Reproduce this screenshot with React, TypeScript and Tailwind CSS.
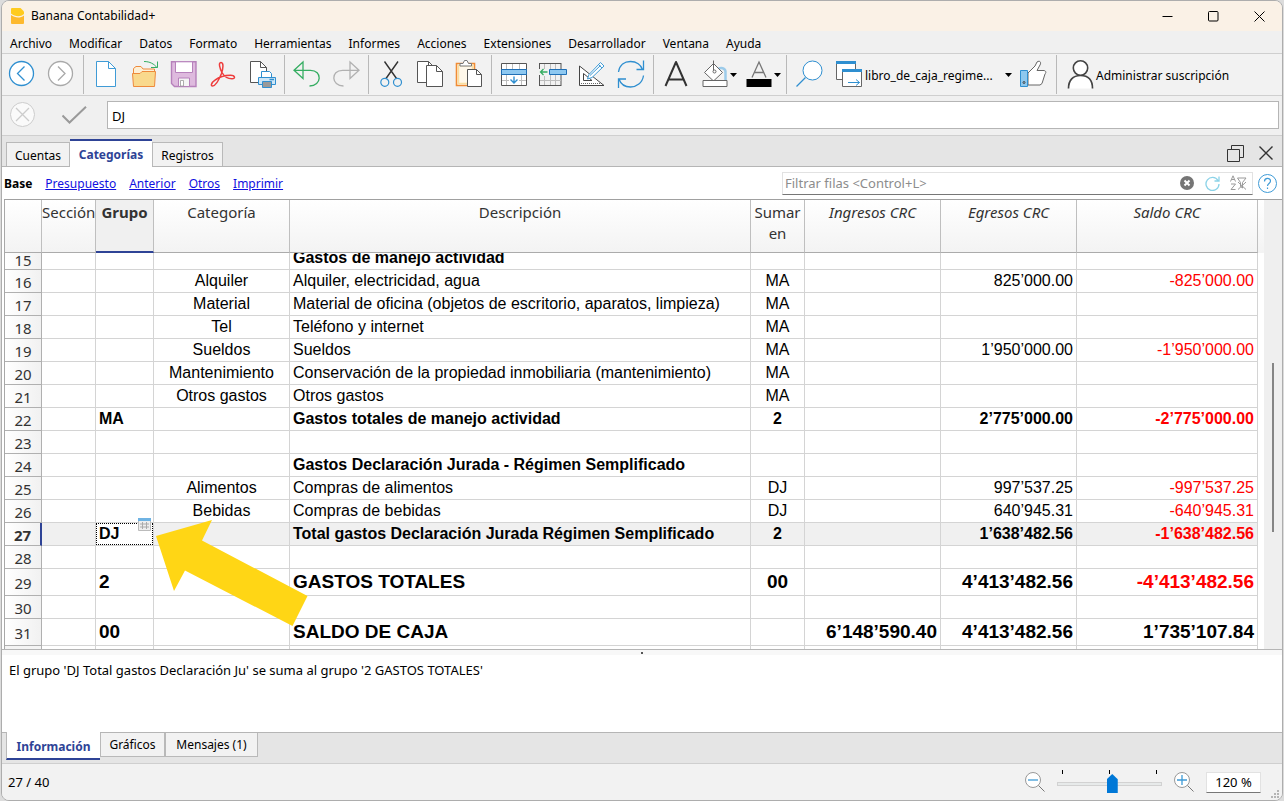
import React from "react";

const menus = ["Archivo", "Modificar", "Datos", "Formato", "Herramientas", "Informes", "Acciones", "Extensiones", "Desarrollador", "Ventana", "Ayuda"];

type Row = {
  n: number;
  group?: string;
  cat?: string;
  desc?: string;
  sum?: string;
  inc?: string;
  exp?: string;
  bal?: string;
  bold?: boolean;
  big?: boolean;
  black?: boolean;
};

const rows: Row[] = [
  { n: 15, desc: "Gastos de manejo actividad", bold: true },
  { n: 16, cat: "Alquiler", desc: "Alquiler, electricidad, agua", sum: "MA", exp: "825’000.00", bal: "-825’000.00" },
  { n: 17, cat: "Material", desc: "Material de oficina (objetos de escritorio, aparatos, limpieza)", sum: "MA" },
  { n: 18, cat: "Tel", desc: "Teléfono y internet", sum: "MA" },
  { n: 19, cat: "Sueldos", desc: "Sueldos", sum: "MA", exp: "1’950’000.00", bal: "-1’950’000.00" },
  { n: 20, cat: "Mantenimiento", desc: "Conservación de la propiedad inmobiliaria (mantenimiento)", sum: "MA" },
  { n: 21, cat: "Otros gastos", desc: "Otros gastos", sum: "MA" },
  { n: 22, group: "MA", desc: "Gastos totales de manejo actividad", sum: "2", exp: "2’775’000.00", bal: "-2’775’000.00", bold: true },
  { n: 23 },
  { n: 24, desc: "Gastos Declaración Jurada - Régimen Semplificado", bold: true },
  { n: 25, cat: "Alimentos", desc: "Compras de alimentos", sum: "DJ", exp: "997’537.25", bal: "-997’537.25" },
  { n: 26, cat: "Bebidas", desc: "Compras de bebidas", sum: "DJ", exp: "640’945.31", bal: "-640’945.31" },
  { n: 27, group: "DJ", desc: "Total gastos Declaración Jurada Régimen Semplificado", sum: "2", exp: "1’638’482.56", bal: "-1’638’482.56", bold: true },
  { n: 28 },
  { n: 29, group: "2", desc: "GASTOS TOTALES", sum: "00", exp: "4’413’482.56", bal: "-4’413’482.56", bold: true, big: true },
  { n: 30 },
  { n: 31, group: "00", desc: "SALDO DE CAJA", inc: "6’148’590.40", exp: "4’413’482.56", bal: "1’735’107.84", bold: true, big: true, black: true },
];

function Icon({ children }: { children: React.ReactNode }) {
  return (
    <svg width="27" height="27" viewBox="0 0 27 27" fill="none" className="shrink-0 overflow-visible" aria-hidden="true">
      {children}
    </svg>
  );
}

function Tool({ label, children }: { label: string; children: React.ReactNode }) {
  return (
    <button aria-label={label} className="flex h-full w-[39px] shrink-0 items-center justify-center">
      <Icon>{children}</Icon>
    </button>
  );
}

function Caret() {
  return (
    <svg width="7" height="4" viewBox="0 0 7 4" className="shrink-0" aria-hidden="true">
      <path d="M0 0H7L3.5 4Z" fill="#000" />
    </svg>
  );
}

function Sep() {
  return (
    <div className="flex h-[39px] w-[6px] shrink-0 justify-center">
      <div className="w-px bg-[#b9b9b9]" />
    </div>
  );
}

function Toolbar() {
  return (
    <div className="flex h-[42px] shrink-0 items-center border-b border-[#cfcfcf] bg-[#f2f2f2]">
      <Tool label="Atrás">
        <circle cx="13.500" cy="12.500" r="12" fill="#fff" stroke="#2f8fd0" strokeWidth="1.300" />
        <path d="M16.500 5.500L9.500 12.500L16.500 19.500" stroke="#2f8fd0" strokeWidth="1.300" />
      </Tool>
      <Tool label="Adelante">
        <circle cx="13.500" cy="12.500" r="12" fill="#fff" stroke="#a9a9a9" strokeWidth="1.300" />
        <path d="M11 5.500L18 12.500L11 19.500" stroke="#a9a9a9" strokeWidth="1.300" />
      </Tool>
      <Sep />
      <Tool label="Nuevo">
        <path d="M4.500 .5H16.500L23.500 7.500V25.500H4.500Z" fill="#fff" stroke="#3f9bd6" />
        <path d="M16.500 .5V7.500H23.500" stroke="#3f9bd6" />
      </Tool>
      <Tool label="Abrir">
        <path d="M2.500 15V7.500L5 5.500H10L12 8H23.500V15" fill="#fdf0d6" stroke="#ee8a3c" />
        <path d="M1.500 12.500H9L11 10.500H24.500L23.500 25.500H2.500Z" fill="#f9d98d" stroke="#ee8a3c" />
        <path d="M13 .5C19 .5 23 3 26 6.500M26.500 .5V6.500H20" stroke="#35ad62" />
      </Tool>
      <Tool label="Guardar">
        <path d="M1.500 .8H26V25.500H4.500L1.500 22.500Z" fill="#debade" stroke="#b681bb" strokeWidth="1.400" />
        <path d="M5.500 .8H22.500V11.500H5.500Z" fill="#fff" stroke="#b681bb" />
        <path d="M8.500 17H19.500V25.500H8.500Z" fill="#f4f4f4" stroke="#b681bb" />
        <path d="M10.500 19.500H13.500V25H10.500Z" fill="#fff" stroke="#999" strokeWidth=".8" />
      </Tool>
      <Tool label="Exportar PDF">
        <path d="M12 1.500C9 1.500 11 8 13 11.500C15.500 16 19.500 17.800 23 17.800C27 17.800 26 14.300 21.500 14.300C16.500 14.300 9.500 16.500 6 19.200C2 22 1.500 25 3.500 25C6.500 25 10.500 17.500 12.500 12.500C14 8 15 1.500 12 1.500Z" stroke="#ee3d3d" strokeWidth="1.500" />
      </Tool>
      <Tool label="Imprimir">
        <path d="M2.500 .5H12.500L18.500 6.500V21.500H2.500Z" fill="#fff" stroke="#555" />
        <path d="M12.500 .5V6.500H18.500" stroke="#555" />
        <path d="M13.500 10.500H21.500L23.500 12.500V17H13.500Z" fill="#fff" stroke="#2f8fd0" />
        <path d="M10.500 16.500H27.500V23.500H10.500Z" fill="#cde6f7" stroke="#2f8fd0" />
        <path d="M14.500 20.500H23.500V26.500H14.500Z" fill="#999" stroke="#2f8fd0" />
        <path d="M21.500 18.500H26" stroke="#2f8fd0" strokeWidth="1.500" />
      </Tool>
      <Sep />
      <Tool label="Deshacer">
        <path d="M10 1V17.500L1 9.300ZM1 9.300H17.500C29.500 9.300 29 25 16.500 25" stroke="#35ad62" strokeWidth="1.300" />
      </Tool>
      <Tool label="Rehacer">
        <path d="M18 1V17.500L27 9.300ZM27 9.300H10.500C-1.500 9.300 -1 25 11.500 25" stroke="#b1b1b1" strokeWidth="1.300" />
      </Tool>
      <Sep />
      <Tool label="Cortar">
        <path d="M7.500 .5L19.500 17.500M21 .5L9 17.500" stroke="#333" strokeWidth="1.400" />
        <circle cx="7.800" cy="21.300" r="4" stroke="#2f8fd0" strokeWidth="1.200" />
        <circle cx="20.500" cy="21.300" r="4" stroke="#2f8fd0" strokeWidth="1.200" />
      </Tool>
      <Tool label="Copiar">
        <path d="M1.500 .5H12.500L17.500 5.500V21.500H1.500Z" fill="#fff" stroke="#555" />
        <path d="M12.500 .5V5.500H17.500" stroke="#555" />
        <path d="M10.500 4.500H20.500L26.500 10.500V25.500H10.500Z" fill="#fff" stroke="#555" />
        <path d="M20.500 4.500V10.500H26.500" stroke="#555" />
      </Tool>
      <Tool label="Pegar">
        <path d="M1.500 2.500H19.500V24.500H1.500Z" fill="#fff8ea" stroke="#f08c35" strokeWidth="1.600" />
        <path d="M3.500 4.500H17.500V22.500H3.500Z" stroke="#f9dfa0" strokeWidth="1.500" />
        <path d="M5 5V2.500H8L9.500 -.5H12L13.500 2.500H16.500V5Z" fill="#fff" stroke="#777" />
        <path d="M12.500 8.500H21.500L26.500 13.500V25.500H12.500Z" fill="#fff" stroke="#555" />
        <path d="M21.500 8.500V13.500H26.500" stroke="#555" />
      </Tool>
      <Sep />
      <Tool label="Agregar filas">
        <path d="M1.500 2.500H26.500V24.500H1.500Z" fill="#fff" stroke="#555" />
        <path d="M6.500 3V8M6.500 14V24M12.500 3V8M19.500 3V8M21.500 14V24M2 19.500H9M19 19.500H26" stroke="#bdbdbd" />
        <path d="M1.500 8.500H26.500V13.500H1.500Z" fill="#8ec8f0" stroke="#1f6fb5" />
        <path d="M14 15.500V22M10.500 18.500L14 22L17.500 18.500" stroke="#2f8fd0" strokeWidth="1.400" />
      </Tool>
      <Tool label="Insertar filas">
        <path d="M1 2.500H22M1 24.500H22M.5 2V8M.5 14V25M22 2V8M22 14V25" stroke="#555" />
        <path d="M5.500 3V8M11.500 3V8M16.500 3V8M5.500 15V24M11.500 14V24M16.500 14V24M1 19.500H22" stroke="#bdbdbd" />
        <path d="M10.500 8.500H27.500V13.500H10.500Z" fill="#8ec8f0" stroke="#1f6fb5" />
        <path d="M1.500 11H8.500M4.500 8L1.500 11L4.500 14" stroke="#35ad62" strokeWidth="1.300" />
      </Tool>
      <Tool label="Diseño">
        <path d="M1.500 5L26 24.500H1.500Z" stroke="#444" fill="#fff" />
        <path d="M5.500 12.500V19.500H14Z" stroke="#444" />
        <path d="M3 22.500H22" stroke="#666" strokeDasharray="1 1" />
        <path d="M9.500 18L11 13.500L22.500 1.500L26 5L14 16.500Z" fill="#fff" stroke="#3f9bd6" />
        <path d="M20.500 3.500L24 7M12 14.500L22.500 4.500" stroke="#3f9bd6" />
      </Tool>
      <Tool label="Recalcular">
        <path d="M1.500 11C2.500 4 7.500 .5 13.500 .5C19.500 .5 24 4 25.500 8.500M26.500 -.5V8.500H19.500M26.500 14.500C25.500 22 19.500 26 13.500 26C7.500 26 3.500 22.500 2 18M1.500 27V18H9" stroke="#2f8fd0" strokeWidth="1.300" />
      </Tool>
      <Sep />
      <Tool label="Fuente">
        <path d="M3.500 25L14 1L24.500 25M7 18.500H21" stroke="#333" strokeWidth="2" strokeLinejoin="round" />
      </Tool>
      <button aria-label="Color de fondo" className="flex h-full w-[44px] shrink-0 items-center gap-[2px] pl-[6px]">
        <Icon>
          <path d="M17 8C21.500 5.500 25 8 24.500 12V20" stroke="#9ccbea" strokeWidth="2.500" />
          <path d="M12.500 2.500L21.500 11.500L12.500 20L3.500 11.500Z" fill="#fff" stroke="#666" />
          <path d="M12.500 -.5V9.500" stroke="#666" />
          <circle cx="13.500" cy="10.500" r="1.500" stroke="#666" />
          <path d="M2 19.500H26V25.500H2Z" fill="#fff" stroke="#666" />
        </Icon>
        <Caret />
      </button>
      <button aria-label="Color de texto" className="flex h-full w-[44px] shrink-0 items-center gap-[2px] pl-[6px]">
        <Icon>
          <path d="M7 16.500L14 1L21 16.500M9.500 11.500H18.500" stroke="#777" strokeWidth="1.300" />
          <path d="M1.500 18H26.500V26H1.500Z" fill="#000" />
        </Icon>
        <Caret />
      </button>
      <Sep />
      <Tool label="Buscar">
        <circle cx="17.500" cy="9.500" r="9.500" fill="#fff" stroke="#2f8fd0" />
        <path d="M10.500 16.500L1.500 25.500" stroke="#2f8fd0" strokeWidth="1.200" />
      </Tool>
      <button className="flex h-full w-[191px] shrink-0 items-center pl-[7px] text-left">
        <Icon>
          <path d="M1.500 .5H20.500V18.500H1.500Z" fill="#fff" stroke="#666" />
          <path d="M1 0H21V3H1Z" fill="#2f8fd0" />
          <path d="M7.500 8.500H26.500V25.500H7.500Z" fill="#fff" stroke="#666" />
          <path d="M7 8H27V11H7Z" fill="#2f8fd0" />
          <path d="M13 21.500H24.500M21 18.500L24.500 21.500L21 24.500" stroke="#2f8fd0" />
        </Icon>
        <span className="ml-[3px] flex-1 pt-[2px]">libro_de_caja_regime...</span>
        <span className="mr-[7px]"><Caret /></span>
      </button>
      <button aria-label="Me gusta" className="flex h-full w-[34px] shrink-0 items-center">
        <Icon>
          <path d="M9 12L16 5L18 1C21 -1 22.500 1.500 21 4L18 9.500H25C27.500 10 27 12 26 13L23 22.500L21 24H9Z" fill="#fff" stroke="#666" />
          <path d="M1.500 9.500H8.500V25.500H1.500Z" fill="#8ec8ee" stroke="#2f8fd0" />
          <circle cx="5" cy="21.500" r="1" stroke="#444" />
        </Icon>
      </button>
      <Sep />
      <button className="flex h-full shrink-0 items-center gap-[2px] pl-[8px]">
        <Icon>
          <path d="M1.500 27.500C1.500 19 6 14.500 13.500 14.500C21 14.500 25.500 19 25.500 27.500" fill="#fff" stroke="#444" strokeWidth="1.700" />
          <circle cx="13.500" cy="7" r="7.200" fill="#fff" stroke="#444" strokeWidth="1.600" />
        </Icon>
        <span className="pt-[2px]">Administrar suscripción</span>
      </button>
    </div>
  );
}

const th = "border-r border-b border-r-[#bfbfbf] border-b-[#ababab] bg-linear-to-b from-white to-[#f3f3f3] px-0 pt-[2px] align-top text-[15px] leading-[21px] font-normal text-[#333]";

function Ledger() {
  return (
    <table className="w-full table-fixed border-separate border-spacing-0 border-l border-[#a8a8a8] font-['Liberation_Sans',sans-serif] text-[16px] leading-[18px]">
      <colgroup>
        <col className="w-[37px]" />
        <col className="w-[54px]" />
        <col className="w-[58px]" />
        <col className="w-[136px]" />
        <col />
        <col className="w-[54px]" />
        <col className="w-[136px]" />
        <col className="w-[136px]" />
        <col className="w-[181px]" />
      </colgroup>
      <thead className="font-['Noto_Sans',sans-serif]">
        <tr className="h-[53px]">
          <th className={th} aria-label="Fila" />
          <th className={th}>Sección</th>
          <th className="border-r border-b-2 border-r-[#bfbfbf] border-b-[#2e4396] bg-[#f0f0f0] pt-[2px] align-top text-[15px] leading-[21px] font-bold text-[#333]">Grupo</th>
          <th className={th}>Categoría</th>
          <th className={th}>Descripción</th>
          <th className={th}>Sumar en</th>
          <th className={th}><i>Ingresos CRC</i></th>
          <th className={th}><i>Egresos CRC</i></th>
          <th className={th}><i>Saldo CRC</i></th>
        </tr>
      </thead>
      <tbody>
        {rows.map((r) => {
          const active = r.n === 27;
          const first = r.n === 15;
          const td = "border-r border-b border-[#d4d4d4] whitespace-nowrap px-[3px] py-0 " + (first ? "align-top" : "align-middle");
          const text = (s?: string) => (first && s ? <div className="flex h-[14px] items-end overflow-hidden">{s}</div> : s);
          return (
            <tr
              key={r.n}
              className={
                (first ? "h-[17px] " : r.big ? "h-[27px] text-[19px] leading-[22px] " : "h-[23px] ") +
                (r.bold ? "font-bold " : "") +
                (active ? "bg-[#f0f0f0]" : "")
              }
            >
              <th
                className={
                  "border-b border-[#b0b0b0] bg-linear-to-r from-white to-[#f1f1f1] px-0 pb-0 text-center font-['Noto_Sans',sans-serif] text-[15px] text-[#333] " +
                  (first ? "pt-0 align-top leading-[14px] " : "pt-[2px] leading-[15px] ") +
                  (active ? "border-r-2 border-r-[#2e4396] font-bold" : "border-r font-normal")
                }
              >
                {r.n}
              </th>
              <td className={td} />
              {active ? (
                <td className="relative border-r border-b border-[#d4d4d4] p-0">
                  <div className="h-[22px] border border-dotted border-black bg-white pl-[2px] leading-[20px]">{r.group}</div>
                  <svg width="13" height="13" viewBox="0 0 13 13" className="absolute -top-[5px] left-[42px]" aria-hidden="true">
                    <path d="M.5 .5H12.500V12.500H.5Z" fill="#eee" stroke="#bbb" />
                    <path d="M0 0H13V3H0Z" fill="#6fb3e3" />
                    <path d="M2 6H11M2 9H11M4.500 4V11M8.500 4V11" stroke="#aaa" />
                  </svg>
                  <svg width="152" height="107" viewBox="0 0 152 107" className="absolute -top-[3px] left-[60px] z-10 max-w-none" aria-hidden="true">
                    <path d="M0 16L56 0L46 20.500L151.500 76L136.500 106L29 50.500L18 71Z" fill="#ffd615" />
                  </svg>
                </td>
              ) : (
                <td className={td}>{r.group}</td>
              )}
              <td className={td + " text-center"}>{r.cat}</td>
              <td className={td}>{text(r.desc)}</td>
              <td className={td + " text-center"}>{r.sum}</td>
              <td className={td + " text-right"}>{r.inc}</td>
              <td className={td + " text-right"}>{r.exp}</td>
              <td className={td + " text-right " + (r.black ? "text-black" : "text-[#f00]")}>{r.bal}</td>
            </tr>
          );
        })}
        <tr className="h-[23px]">
          <th className="border-r border-[#b0b0b0] bg-[#f4f4f4]" aria-label="Fila siguiente" />
          {[1, 2, 3, 4, 5, 6, 7, 8].map((i) => (
            <td key={i} className="border-r border-[#d4d4d4]" />
          ))}
        </tr>
      </tbody>
    </table>
  );
}

function Magnifier({ plus }: { plus?: boolean }) {
  return (
    <svg width="20" height="20" viewBox="0 0 20 20" fill="none" aria-hidden="true">
      <circle cx="8" cy="8" r="7.500" fill="#fff" stroke="#999" />
      <path d="M13.500 13.500L19.500 19.500" stroke="#777" />
      <path d={plus ? "M3 8H13M8 3V13" : "M3 8H13"} stroke="#3f9bd6" strokeWidth="1.300" />
    </svg>
  );
}

export default function App() {
  return (
    <div className="h-screen bg-[#dcdcdc] px-px font-['Noto_Sans',sans-serif] text-[12px] text-black">
      <div className="flex h-full flex-col overflow-hidden rounded-lg border border-[#adadad] bg-[#f0f0f0]">
        <header className="flex h-[30px] shrink-0 items-center bg-[#faf1e6] pl-[9px]">
          <svg width="13" height="16" viewBox="0 0 13 16" aria-hidden="true">
            <path d="M1 0H9.500L13 3.500V6C9 9.500 4 8.500 0 5.500V1Q0 0 1 0Z" fill="#ffcb1f" />
            <path d="M0 7C4 10 9 10.500 13 7.500V15Q13 16 12 16H1Q0 16 0 15Z" fill="#fdb92e" />
          </svg>
          <h1 className="ml-[7px] flex-1">Banana Contabilidad+</h1>
          <button aria-label="Minimizar" className="flex h-full w-[46px] items-center justify-center">
            <svg width="11" height="11" viewBox="0 0 11 11"><path d="M.5 5.500H10.500" stroke="#000" /></svg>
          </button>
          <button aria-label="Maximizar" className="flex h-full w-[46px] items-center justify-center">
            <svg width="11" height="11" viewBox="0 0 11 11"><rect x=".5" y=".5" width="9.500" height="9.500" rx="1" fill="none" stroke="#000" /></svg>
          </button>
          <button aria-label="Cerrar" className="flex h-full w-[46px] items-center justify-center">
            <svg width="11" height="11" viewBox="0 0 11 11"><path d="M.5 .5L10.500 10.500M10.500 .5L.5 10.500" stroke="#000" /></svg>
          </button>
        </header>
        <nav className="flex h-[23px] shrink-0 items-center gap-[17px] border-b border-[#cfcfcf] pt-[3px] pl-[8px]">
          {menus.map((m) => (
            <button key={m}>{m}</button>
          ))}
        </nav>
        <Toolbar />
        <div className="flex h-[40px] shrink-0 items-start border-b border-[#cfcfcf] pr-[3px] pl-[8px]">
          <button aria-label="Cancelar" className="mt-[6px]">
            <svg width="25" height="25" viewBox="0 0 25 25" fill="none">
              <circle cx="12.500" cy="12.500" r="12" fill="#fafafa" stroke="#ccc" />
              <path d="M6 6L19 19M19 6L6 19" stroke="#ccc" strokeWidth="1.300" />
            </svg>
          </button>
          <button aria-label="Aceptar" className="mt-[10px] ml-[27px]">
            <svg width="25" height="18" viewBox="0 0 25 18" fill="none">
              <path d="M.5 9.500L7.500 16.500L24 .8" stroke="#9a9a9a" strokeWidth="2" />
            </svg>
          </button>
          <input aria-label="Contenido de la celda" defaultValue="DJ" className="mt-[5px] ml-[20px] h-[28px] min-w-0 flex-1 border border-[#b5b5b5] bg-white px-[4px] pt-[2px] text-[13px] outline-none" />
        </div>

        <div className="flex h-[31px] shrink-0 border-b border-[#b5b5b5] bg-[#e5e5e5] pl-[4px]">
          <div className="flex flex-1 items-end">
            <button className="h-[24px] w-[64px] border border-b-0 border-[#b9b9b9] bg-[#f2f2f2] pt-[2px]">Cuentas</button>
            <button className="-mb-px h-[28px] w-[82px] border-t-2 border-[#2e4396] bg-white pt-[2px] font-bold text-[#2e4396]">Categorías</button>
            <button className="h-[24px] w-[71px] border border-b-0 border-[#b9b9b9] bg-[#f2f2f2] pt-[2px]">Registros</button>
          </div>
          <button aria-label="Restaurar" className="mr-[15px] pt-[4px]">
            <svg width="17" height="17" viewBox="0 0 17 17" fill="none"><path d="M.5 4.500H12.500V16.500H.5ZM4.500 4V.5H16.500V12.500H13" stroke="#333" /></svg>
          </button>
          <button aria-label="Cerrar tabla" className="mr-[9px] pt-[4px]">
            <svg width="14" height="14" viewBox="0 0 14 14"><path d="M.5 .5L13.500 13.500M13.500 .5L.5 13.500" stroke="#333" strokeWidth="1.400" /></svg>
          </button>
        </div>

        <div className="flex h-[32px] shrink-0 items-center bg-white pr-[5px] pl-[2px]">
          <div className="flex flex-1 gap-[13px] pt-[2px]">
            <b>Base</b>
            {["Presupuesto", "Anterior", "Otros", "Imprimir"].map((l) => (
              <a key={l} href="#" className="text-[#1010e0] underline">{l}</a>
            ))}
          </div>
          <div className="flex h-[23px] w-[471px] items-center border border-[#e2e2e2] border-b-[#777]">
            <input aria-label="Filtrar filas" placeholder="Filtrar filas <Control+L>" className="min-w-0 flex-1 pt-px pl-[2px] text-[13px] outline-none placeholder:text-[#8c8c8c]" />
            <button aria-label="Borrar filtro">
              <svg width="14" height="14" viewBox="0 0 14 14"><circle cx="7" cy="7" r="7" fill="#757575" /><path d="M4.500 4.500L9.500 9.500M9.500 4.500L4.500 9.500" stroke="#fff" strokeWidth="2" /></svg>
            </button>
            <button aria-label="Actualizar filtro" className="ml-[11px]">
              <svg width="15" height="15" viewBox="0 0 15 15" fill="none"><path d="M13 4.500A6.500 6.500 0 1 0 14 8M14 .5V5H9.500" stroke="#8cd3e8" strokeWidth="1.300" /></svg>
            </button>
            <button aria-label="Quitar orden y filtro" className="mr-[5px] ml-[10px]">
              <svg width="17" height="16" viewBox="0 0 17 16" fill="none" stroke="#999"><path d="M.5 6.500L3 .8L5.500 6.500M1.500 4.500H4.500M1 9H5.500L1 14.500H5.500M7.500 3H16L12.500 7.500V13L10.500 11.500V7.500ZM8 7L16 14.500M16 7L8 14.500" /></svg>
            </button>
          </div>
          <button aria-label="Ayuda" className="ml-[5px]">
            <svg width="19" height="19" viewBox="0 0 19 19" fill="none" stroke="#3f9bd6"><circle cx="9.500" cy="9.500" r="9" /><path d="M6.500 7.500C6.500 3.500 12.500 3.500 12.500 7C12.500 9.500 9.500 9.500 9.500 12M9.500 13.500V15" strokeWidth="1.200" /></svg>
          </button>
        </div>

        <main className="flex min-h-0 flex-1 border-b border-[#b5b5b5] bg-white pl-[2px]">
          <div className="min-w-0 flex-1 overflow-hidden border-t border-[#a0a0a0]"><Ledger /></div>
          <div className="w-[6px] border-t border-[#a0a0a0]">
            <div className="h-[53px] bg-linear-to-b from-white to-[#f3f3f3]" />
          </div>
          <div className="flex w-[18px] flex-col items-center border-t border-[#a0a0a0] bg-[#efefef]">
            <div className="flex-[163]" />
            <div className="w-[2px] flex-[169] bg-[#858585]" />
            <div className="flex-[117]" />
          </div>
        </main>
        <div className="flex h-[5px] shrink-0 items-center justify-center bg-[#f8f8f8]">
          <div className="h-[2px] w-[2px] bg-[#555]" />
        </div>
        <section className="h-[77px] shrink-0 bg-white pt-[6px] pl-[7px] text-[13px]">El grupo 'DJ Total gastos Declaración Ju' se suma al grupo '2 GASTOS TOTALES'</section>
        <div className="flex h-[32px] shrink-0 items-start border-y border-t-[#b5b5b5] border-b-[#cfcfcf] bg-[#e5e5e5] pl-[4px]">
          <button className="-mt-px h-[28px] w-[94px] border-b-2 border-l border-b-[#2e4396] border-l-[#b9b9b9] bg-white pt-[3px] font-bold text-[#2e4396]">Información</button>
          <button className="h-[24px] w-[65px] border border-t-0 border-[#b9b9b9] bg-[#f2f2f2] pt-px">Gráficos</button>
          <button className="h-[24px] w-[93px] border border-t-0 border-[#b9b9b9] bg-[#f2f2f2] pt-px">Mensajes (1)</button>
        </div>
        <footer className="relative flex h-[36px] shrink-0 items-center bg-[#f2f2f2] pr-[21px] pl-[6px] text-[13px]">
          <span className="flex-1 pt-px">27 / 40</span>
          <button aria-label="Reducir"><Magnifier /></button>
          <div className="mx-[12px] flex w-[105px] flex-col">
            <div className="flex h-[4px] justify-between px-[5px]">
              <i className="w-px bg-black" />
              <i className="w-px bg-black" />
              <i className="w-px bg-black" />
            </div>
            <input
              type="range"
              aria-label="Zoom"
              min="0"
              max="100"
              defaultValue="53"
              className="h-[20px] w-full appearance-none bg-transparent [&::-webkit-slider-runnable-track]:h-[4px] [&::-webkit-slider-runnable-track]:border [&::-webkit-slider-runnable-track]:border-[#d2d2d2] [&::-webkit-slider-runnable-track]:bg-[#e7eaea] [&::-webkit-slider-thumb]:-mt-[9px] [&::-webkit-slider-thumb]:h-[19px] [&::-webkit-slider-thumb]:w-[11px] [&::-webkit-slider-thumb]:appearance-none [&::-webkit-slider-thumb]:bg-[#0078d7] [&::-webkit-slider-thumb]:[clip-path:polygon(50%_0,100%_28%,100%_100%,0_100%,0_28%)]"
            />
          </div>
          <button aria-label="Ampliar"><Magnifier plus /></button>
          <input aria-label="Nivel de zoom" defaultValue="120 %" className="ml-[12px] h-[21px] w-[55px] border border-[#e2e2e2] border-b-[#777] bg-white text-center outline-none" />
          <svg width="9" height="9" viewBox="0 0 9 9" className="absolute right-[2px] bottom-[1px]" fill="#b5b5b5" aria-hidden="true">
            <path d="M6 0H8V2H6ZM3 3H5V5H3ZM6 3H8V5H6ZM0 6H2V8H0ZM3 6H5V8H3ZM6 6H8V8H6Z" />
          </svg>
        </footer>
      </div>
    </div>
  );
}
